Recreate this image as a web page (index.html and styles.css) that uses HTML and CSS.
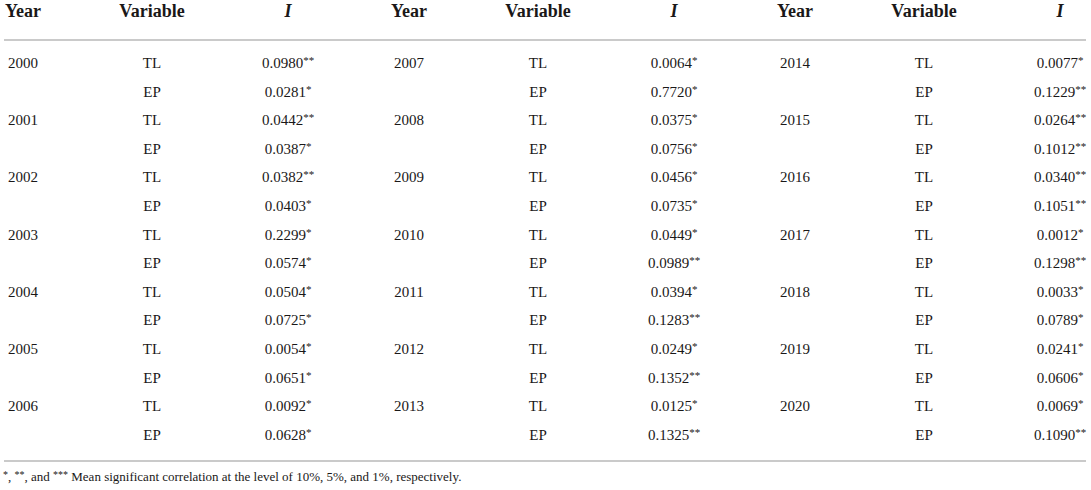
FILE: index.html
```html
<!DOCTYPE html>
<html lang="en">
<head>
  <meta charset="UTF-8">
  <title>Moran's I by year</title>
  <link rel="stylesheet" href="styles.css">
</head>
<body>
  <table class="moran">
    <colgroup>
      <col class="c-year"><col class="c-var"><col class="c-val">
      <col class="c-year"><col class="c-var"><col class="c-val">
      <col class="c-year"><col class="c-var"><col class="c-last">
    </colgroup>
    <thead>
      <tr>
        <th>Year</th><th>Variable</th><th class="val"><i>I</i></th>
        <th>Year</th><th>Variable</th><th class="val"><i>I</i></th>
        <th>Year</th><th>Variable</th><th class="last"><i>I</i></th>
      </tr>
    </thead>
    <tbody>
      <tr><td>2000</td><td>TL</td><td class="val">0.0980<sup>**</sup></td><td>2007</td><td>TL</td><td class="val">0.0064<sup>*</sup></td><td>2014</td><td>TL</td><td class="last">0.0077<sup>*</sup></td></tr>
      <tr><td></td><td>EP</td><td class="val">0.0281<sup>*</sup></td><td></td><td>EP</td><td class="val">0.7720<sup>*</sup></td><td></td><td>EP</td><td class="last">0.1229<sup>**</sup></td></tr>
      <tr><td>2001</td><td>TL</td><td class="val">0.0442<sup>**</sup></td><td>2008</td><td>TL</td><td class="val">0.0375<sup>*</sup></td><td>2015</td><td>TL</td><td class="last">0.0264<sup>**</sup></td></tr>
      <tr><td></td><td>EP</td><td class="val">0.0387<sup>*</sup></td><td></td><td>EP</td><td class="val">0.0756<sup>*</sup></td><td></td><td>EP</td><td class="last">0.1012<sup>**</sup></td></tr>
      <tr><td>2002</td><td>TL</td><td class="val">0.0382<sup>**</sup></td><td>2009</td><td>TL</td><td class="val">0.0456<sup>*</sup></td><td>2016</td><td>TL</td><td class="last">0.0340<sup>**</sup></td></tr>
      <tr><td></td><td>EP</td><td class="val">0.0403<sup>*</sup></td><td></td><td>EP</td><td class="val">0.0735<sup>*</sup></td><td></td><td>EP</td><td class="last">0.1051<sup>**</sup></td></tr>
      <tr><td>2003</td><td>TL</td><td class="val">0.2299<sup>*</sup></td><td>2010</td><td>TL</td><td class="val">0.0449<sup>*</sup></td><td>2017</td><td>TL</td><td class="last">0.0012<sup>*</sup></td></tr>
      <tr><td></td><td>EP</td><td class="val">0.0574<sup>*</sup></td><td></td><td>EP</td><td class="val">0.0989<sup>**</sup></td><td></td><td>EP</td><td class="last">0.1298<sup>**</sup></td></tr>
      <tr><td>2004</td><td>TL</td><td class="val">0.0504<sup>*</sup></td><td>2011</td><td>TL</td><td class="val">0.0394<sup>*</sup></td><td>2018</td><td>TL</td><td class="last">0.0033<sup>*</sup></td></tr>
      <tr><td></td><td>EP</td><td class="val">0.0725<sup>*</sup></td><td></td><td>EP</td><td class="val">0.1283<sup>**</sup></td><td></td><td>EP</td><td class="last">0.0789<sup>*</sup></td></tr>
      <tr><td>2005</td><td>TL</td><td class="val">0.0054<sup>*</sup></td><td>2012</td><td>TL</td><td class="val">0.0249<sup>*</sup></td><td>2019</td><td>TL</td><td class="last">0.0241<sup>*</sup></td></tr>
      <tr><td></td><td>EP</td><td class="val">0.0651<sup>*</sup></td><td></td><td>EP</td><td class="val">0.1352<sup>**</sup></td><td></td><td>EP</td><td class="last">0.0606<sup>*</sup></td></tr>
      <tr><td>2006</td><td>TL</td><td class="val">0.0092<sup>*</sup></td><td>2013</td><td>TL</td><td class="val">0.0125<sup>*</sup></td><td>2020</td><td>TL</td><td class="last">0.0069<sup>*</sup></td></tr>
      <tr><td></td><td>EP</td><td class="val">0.0628<sup>*</sup></td><td></td><td>EP</td><td class="val">0.1325<sup>**</sup></td><td></td><td>EP</td><td class="last">0.1090<sup>**</sup></td></tr>
    </tbody>
  </table>
  <p class="note"><sup>*</sup>, <sup>**</sup>, and <sup>***</sup> Mean significant correlation at the level of 10%, 5%, and 1%, respectively.</p>
</body>
</html>
```

FILE: styles.css
```css
body {
  margin: 0;
  background: #fff;
  color: #1a1818;
  font-family: "Liberation Serif", "Times New Roman", serif;
  overflow: hidden;
}
.moran {
  margin-left: 4px;
  width: 1082px;
  table-layout: fixed;
  border-collapse: collapse;
}
.c-year { width: 38px; }
.c-var { width: 220px; }
.c-val { width: 128px; }
.c-last { width: 52px; }
th, td {
  padding: 0;
  text-align: center;
  white-space: nowrap;
}
th {
  font-size: 18px;
  font-weight: bold;
  line-height: 22px;
  vertical-align: top;
  padding-bottom: 17px;
  border-bottom: 2px solid #cacaca;
}
td {
  font-size: 15px;
  line-height: 28.6px;
}
.val {
  padding-right: 76px;
}
tbody tr:first-child td {
  padding-top: 8px;
}
tbody tr:last-child td {
  padding-bottom: 11px;
  border-bottom: 2px solid #cacaca;
}
sup {
  font-size: 11px;
  line-height: 0;
  vertical-align: 4px;
}
.note {
  margin: 7px 0 0 3px;
  font-size: 13px;
  line-height: 16px;
}
.note sup {
  font-size: 10px;
  vertical-align: 3px;
}
```
